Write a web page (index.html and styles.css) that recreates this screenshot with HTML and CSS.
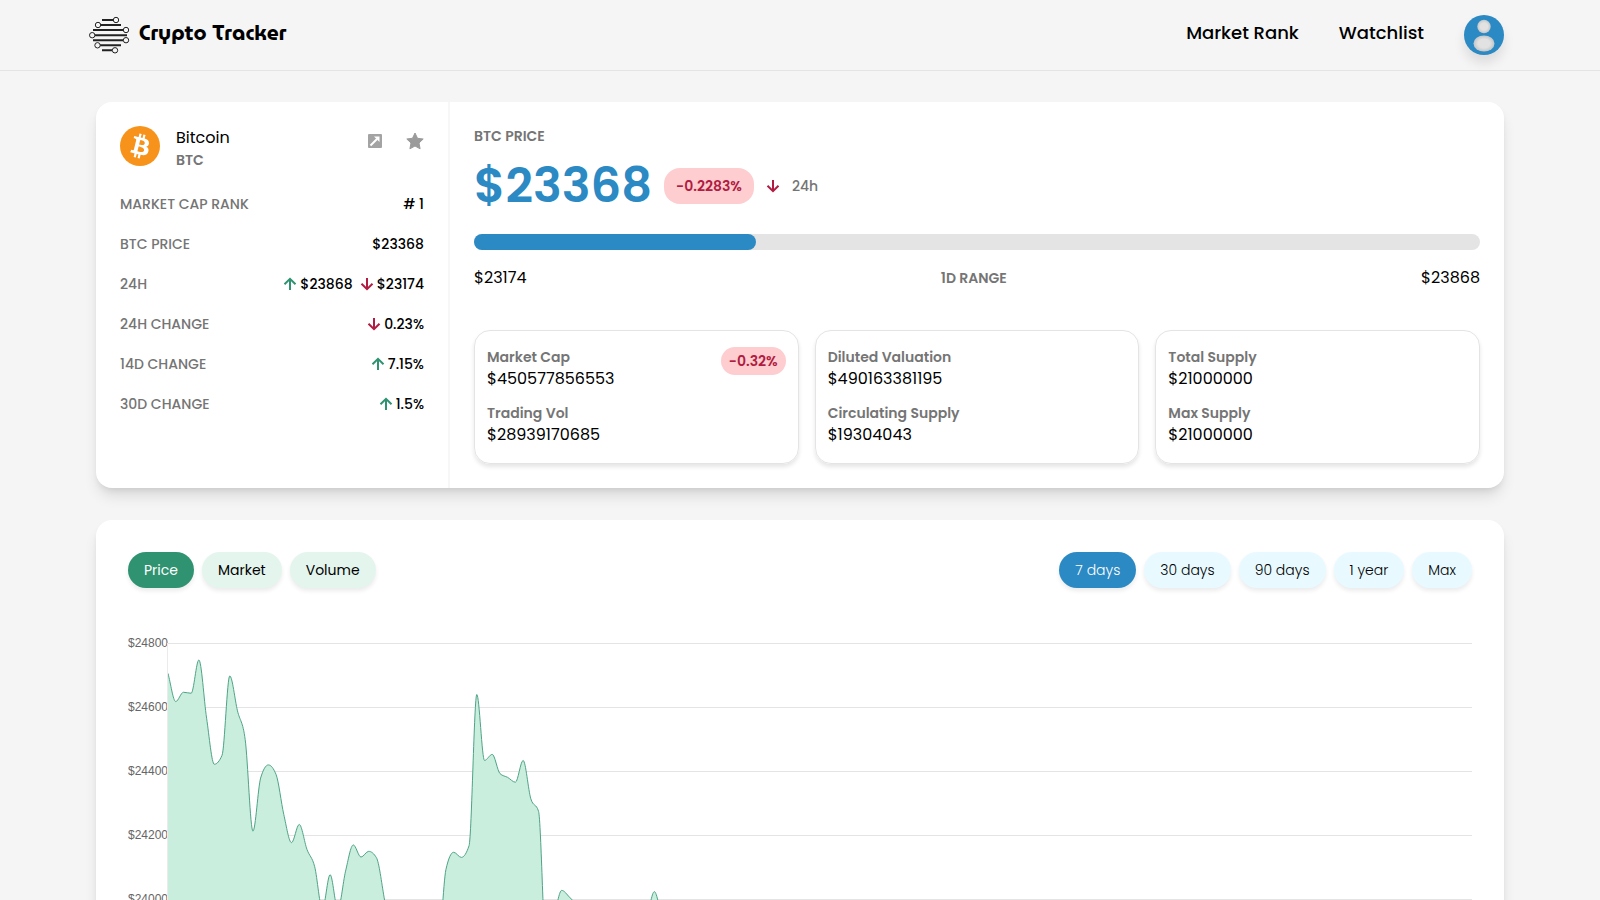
FILE: index.html
```html
<!DOCTYPE html>
<html lang="en">
<head>
  <meta charset="UTF-8" />
  <meta name="viewport" content="width=device-width, initial-scale=1.0" />
  <title>Crypto Tracker</title>
  <link rel="stylesheet" href="styles.css">
</head>
<body>
  <!-- shared icons -->
  <svg class="sprite" aria-hidden="true">
    <symbol id="arrow-up" viewBox="0 0 14 14">
      <path d="M7 13V2M1.500 7.300L7 1.800l5.500 5.500" fill="none" stroke="currentColor" stroke-width="2" />
    </symbol>
    <symbol id="arrow-down" viewBox="0 0 14 14">
      <path d="M7 1v11M1.500 6.700L7 12.200l5.500-5.500" fill="none" stroke="currentColor" stroke-width="2" />
    </symbol>
  </svg>

  <header class="header">
    <a href="#" class="brand">
      <svg class="brand-icon" viewBox="0 0 40 40" fill="none" stroke="#222">
        <path d="M13 5h11M12 10h20M4 15h30M6 20.200h32M4 25.200h30M11 30.300h21M13 35.300h10" stroke-width="2" />
        <g fill="#f5f5f5" stroke-width="1">
          <circle cx="27" cy="5" r="2.700" />
          <circle cx="9" cy="10" r="2.700" />
          <circle cx="37" cy="15" r="2.700" />
          <circle cx="3.200" cy="20.200" r="2.700" />
          <circle cx="37" cy="25.200" r="2.700" />
          <circle cx="8.500" cy="30.300" r="2.700" />
          <circle cx="26" cy="35.300" r="2.700" />
        </g>
      </svg>
      <span class="brand-name">Crypto Tracker</span>
    </a>
    <nav class="nav">
      <a href="#">Market Rank</a>
      <a href="#">Watchlist</a>
      <button class="avatar" aria-label="Account">
        <svg viewBox="0 0 40 40">
          <defs>
            <radialGradient id="shade">
              <stop offset="55%" stop-color="#e2e2e2" />
              <stop offset="100%" stop-color="#c2c6c9" />
            </radialGradient>
          </defs>
          <circle cx="20" cy="11.500" r="6.700" fill="url(#shade)" />
          <ellipse cx="20" cy="28.500" rx="10.500" ry="8" fill="url(#shade)" />
        </svg>
      </button>
    </nav>
  </header>

  <main class="container">
    <section class="card coin">
      <div class="info">
        <div class="coin-head">
          <svg class="coin-logo" viewBox="0 0 32 32">
            <circle cx="16" cy="16" r="16" fill="#f7931a" />
            <path fill="#fff" d="M23.189 14.020c.314-2.096-1.283-3.223-3.465-3.975l.708-2.840-1.728-.430-.690 2.765c-.454-.114-.920-.220-1.385-.326l.695-2.783L15.596 6l-.708 2.839c-.376-.086-.746-.170-1.104-.260l.002-.009-2.384-.595-.460 1.846s1.283.294 1.256.312c.700.175.826.638.805 1.006l-.806 3.235c.048.012.110.030.180.057l-.183-.045-1.130 4.532c-.086.212-.303.531-.793.410.018.025-1.256-.313-1.256-.313l-.858 1.978 2.250.561c.418.105.828.215 1.231.318l-.715 2.872 1.727.430.708-2.840c.472.127.930.245 1.378.357l-.706 2.828 1.728.430.715-2.866c2.948.558 5.164.333 6.097-2.333.752-2.146-.037-3.385-1.588-4.192 1.130-.260 1.980-1.003 2.207-2.538zm-3.950 5.538c-.533 2.147-4.148.986-5.320.695l.950-3.805c1.172.293 4.929.872 4.370 3.110zm.535-5.569c-.487 1.953-3.495.960-4.470.717l.860-3.450c.975.243 4.118.696 3.610 2.733z" />
          </svg>
          <div class="coin-title">
            <h1>Bitcoin</h1>
            <p>BTC</p>
          </div>
          <div class="coin-actions">
            <a href="#" aria-label="Open website">
              <svg width="18" height="18" viewBox="0 0 18 18">
                <rect x="2" y="2" width="14" height="14" rx="1" fill="#a3a3a3" />
                <path d="M4.500 13.500l6.500-6.500" stroke="#fff" stroke-width="2" />
                <path d="M8 4.500h5.500V10z" fill="#fff" />
              </svg>
            </a>
            <button aria-label="Add to watchlist">
              <svg width="18" height="18" viewBox="0 0 18 18">
                <path d="M9 1l2.500 5.300 5.700.700-4.200 4 1.100 5.800L9 14l-5.100 2.800L5 11 .800 7l5.700-.700z" fill="#9b9b9b" stroke="#9b9b9b" stroke-linejoin="round" />
              </svg>
            </button>
          </div>
        </div>
        <dl class="rows">
          <div><dt>MARKET CAP RANK</dt><dd># 1</dd></div>
          <div><dt>BTC PRICE</dt><dd>$23368</dd></div>
          <div>
            <dt>24H</dt>
            <dd>
              <svg class="arrow up"><use href="#arrow-up" /></svg><span>$23868</span>
              <svg class="arrow down next"><use href="#arrow-down" /></svg><span>$23174</span>
            </dd>
          </div>
          <div><dt>24H CHANGE</dt><dd><svg class="arrow down"><use href="#arrow-down" /></svg>0.23%</dd></div>
          <div><dt>14D CHANGE</dt><dd><svg class="arrow up"><use href="#arrow-up" /></svg>7.15%</dd></div>
          <div><dt>30D CHANGE</dt><dd><svg class="arrow up"><use href="#arrow-up" /></svg>1.5%</dd></div>
        </dl>
      </div>

      <div class="stats">
        <h2 class="label">BTC PRICE</h2>
        <div class="price-row">
          <span class="price">$23368</span>
          <span class="badge">-0.2283%</span>
          <svg class="arrow down"><use href="#arrow-down" /></svg>
          <span class="period">24h</span>
        </div>
        <div class="range-bar"><div class="range-fill" style="width: 28%"></div></div>
        <div class="range-labels">
          <span>$23174</span>
          <span class="label">1D RANGE</span>
          <span>$23868</span>
        </div>
        <div class="boxes">
          <dl class="box">
            <dt>Market Cap</dt>
            <dd>$450577856553</dd>
            <dt>Trading Vol</dt>
            <dd>$28939170685</dd>
            <dd class="badge small">-0.32%</dd>
          </dl>
          <dl class="box">
            <dt>Diluted Valuation</dt>
            <dd>$490163381195</dd>
            <dt>Circulating Supply</dt>
            <dd>$19304043</dd>
          </dl>
          <dl class="box">
            <dt>Total Supply</dt>
            <dd>$21000000</dd>
            <dt>Max Supply</dt>
            <dd>$21000000</dd>
          </dl>
        </div>
      </div>
    </section>

    <section class="card history">
      <div class="filters">
        <div class="group types">
          <button class="active">Price</button>
          <button>Market</button>
          <button>Volume</button>
        </div>
        <div class="group days">
          <button class="active">7 days</button>
          <button>30 days</button>
          <button>90 days</button>
          <button>1 year</button>
          <button>Max</button>
        </div>
      </div>
      <div class="chart">
        <div class="axis">
          <span>$24800</span>
          <span>$24600</span>
          <span>$24400</span>
          <span>$24200</span>
          <span>$24000</span>
        </div>
        <div class="plot">
          <svg id="plot" viewBox="0 0 1304 320" preserveAspectRatio="none">
            <path id="area" />
            <path id="line" />
          </svg>
        </div>
      </div>
    </section>
  </main>

  <script src="chart.js"></script>
</body>
</html>
```
FILE: styles.css
```css
* {
  box-sizing: border-box;
}

body {
  margin: 0;
  height: 100vh;
  overflow: hidden;
  background: #f5f5f5;
  color: #000;
  font-family: Poppins, Inter, sans-serif;
  font-size: 16px;
  line-height: 24px;
}

h1, h2, p, dl, dd {
  margin: 0;
}

a {
  color: inherit;
  text-decoration: none;
}

button {
  border: none;
  padding: 0;
  background: none;
  font: inherit;
  color: inherit;
  cursor: pointer;
}

svg {
  display: block;
}

.sprite {
  position: absolute;
  width: 0;
  height: 0;
}

/* header */
.header {
  display: flex;
  justify-content: space-between;
  align-items: center;
  height: 71px;
  padding: 0 6%;
  border-bottom: 1px solid #e4e4e4;
}

.brand {
  display: flex;
  align-items: center;
  gap: 10px;
  margin-left: -7px;
}

.brand-icon {
  width: 40px;
  height: 40px;
  overflow: visible;
}

.brand-name {
  font-family: MuseoModerno, Poppins, sans-serif;
  font-size: 21px;
  font-weight: 700;
  font-kerning: none;
  font-variant-ligatures: none;
  padding-bottom: 4px;
}

.nav {
  display: flex;
  align-items: center;
  gap: 40px;
  font-size: 18px;
  font-weight: 500;
}

.nav a {
  padding-bottom: 4px;
}

.avatar {
  width: 40px;
  height: 40px;
  border-radius: 50%;
  background: #2b89c3;
  box-shadow: 0 8px 12px rgba(0, 0, 0, 0.1);
}

/* cards */
.container {
  width: 88%;
  margin: 31px auto 0;
}

.card {
  background: #fff;
  border-radius: 16px;
  box-shadow: 0 10px 15px -3px rgba(0, 0, 0, 0.12), 0 4px 6px -2px rgba(0, 0, 0, 0.08);
  margin-bottom: 32px;
}

.coin {
  display: grid;
  grid-template-columns: 1fr 3fr;
}

.info {
  padding: 24px;
}

.coin-head {
  display: flex;
  gap: 16px;
}

.coin-logo {
  width: 40px;
  height: 40px;
}

.coin-title h1 {
  font-size: 16px;
  font-weight: 400;
  line-height: 24px;
}

.coin-title p {
  font-size: 14px;
  font-weight: 600;
  line-height: 20px;
  color: #757575;
}

.coin-actions {
  display: flex;
  gap: 22px;
  margin: 6px 0 0 auto;
  height: 18px;
}

.rows {
  margin-top: 14px;
  font-size: 14px;
  font-weight: 500;
}

.rows div {
  display: flex;
  justify-content: space-between;
  align-items: center;
  height: 40px;
}

.rows dt {
  color: #757575;
}

.rows dd {
  display: flex;
  align-items: center;
  gap: 3px;
}

.arrow {
  width: 14px;
  height: 14px;
}

.up {
  color: #2f9270;
}

.down {
  color: #b01c42;
}

.next {
  margin-left: 4px;
}

.stats {
  padding: 24px;
  border-left: 2px solid #f7f7f7;
}

.label {
  font-size: 14px;
  font-weight: 600;
  line-height: 20px;
  color: #757575;
}

.price-row {
  display: flex;
  align-items: center;
  height: 56px;
  margin-top: 12px;
}

.price {
  font-size: 48px;
  font-weight: 600;
  line-height: 56px;
  color: #2b89c3;
}

.badge {
  padding: 6px 12px;
  border-radius: 16px;
  background: #fecdcf;
  color: #b01c42;
  font-size: 14px;
  font-weight: 600;
  line-height: 24px;
}

.price-row .badge {
  margin: 0 12px;
}

.period {
  margin-left: 12px;
  font-size: 14px;
  font-weight: 500;
  color: #757575;
}

.range-bar {
  height: 16px;
  margin-top: 20px;
  border-radius: 8px;
  background: #e4e4e4;
}

.range-fill {
  height: 16px;
  border-radius: 8px;
  background: #2b89c3;
}

.range-labels {
  display: flex;
  justify-content: space-between;
  align-items: center;
  margin-top: 16px;
}

.boxes {
  display: grid;
  grid-template-columns: repeat(3, 1fr);
  gap: 16px;
  margin-top: 40px;
}

.box {
  position: relative;
  padding: 16px 12px;
  border: 1px solid #e4e4e4;
  border-radius: 16px;
  box-shadow: 0 3px 4px rgba(0, 0, 0, 0.1);
}

.box dt {
  font-size: 14px;
  font-weight: 600;
  line-height: 20px;
  color: #757575;
}

.box dd {
  line-height: 24px;
}

.box dd + dt {
  margin-top: 12px;
}

.box .small {
  position: absolute;
  top: 16px;
  right: 12px;
  padding: 2px 8px;
}

/* price history */
.history {
  padding: 32px;
}

.filters {
  display: flex;
  justify-content: space-between;
}

.group {
  display: flex;
  gap: 8px;
  font-size: 14px;
}

.group button {
  height: 36px;
  padding: 0 16px;
  border-radius: 18px;
  box-shadow: 0 3px 4px rgba(0, 0, 0, 0.08);
}

.types button {
  background: #e4f5ee;
}

.types .active {
  background: #2f9270;
  color: #fff;
}

.days button {
  background: #e8faff;
  font-weight: 300;
}

.days .active {
  background: #2b89c3;
  color: #fff;
}

.chart {
  display: grid;
  grid-template-columns: 40px 1fr;
  margin-top: 47px;
}

.axis {
  display: flex;
  flex-direction: column;
  font-family: "Liberation Sans", Arial, sans-serif;
  font-size: 12px;
  color: #666;
}

.axis span {
  height: 64px;
  line-height: 16px;
}

.plot {
  height: 320px;
  margin-top: 8px;
  box-shadow: -1px 0 #ebebeb;
  background: repeating-linear-gradient(#e4e4e4 0 1px, transparent 1px 64px);
}

#plot {
  width: 100%;
  height: 100%;
}

#area {
  fill: #c9eedd;
}

#line {
  fill: none;
  stroke: #4fa387;
  stroke-width: 1;
  vector-effect: non-scaling-stroke;
}
```
FILE: chart.js
```js
// hourly prices
const prices = [
  24705, 24617, 24646, 24643, 24747, 24565, 24421, 24449, 24697, 24588,
  24498, 24212, 24378, 24419, 24389, 24264, 24176, 24233, 24155, 24101,
  23968, 24076, 23968, 24087, 24169, 24131, 24149, 24129, 24004, 23850,
  23800, 23820, 23805, 23815, 23825, 23843, 24092, 24146, 24130, 24167,
  24639, 24433, 24452, 24392, 24380, 24365, 24433, 24313, 24274, 23830,
  23940, 24027, 24006, 23980, 23950, 23930, 23920, 23900, 23890, 23880,
  23880, 23900, 23940, 24023, 23940, 23880, 23850, 23840
];

const step = 7.72;
const pts = prices.map((p, i) => [i * step, (24800 - p) * 64 / 200]);

// monotone tangents, so the curve never overshoots a point
const slopes = pts.slice(1).map((p, i) => (p[1] - pts[i][1]) / step);
const tangents = pts.map((p, i) => {
  const a = slopes[i - 1];
  const b = slopes[i];
  if (a === undefined) return b;
  if (b === undefined) return a;
  if (a * b <= 0) return 0;
  return Math.sign(a) * Math.min(2 * Math.abs(a), 2 * Math.abs(b), Math.abs(a + b) / 2);
});

let d = `M${pts[0][0]} ${pts[0][1]}`;
for (let i = 1; i < pts.length; i++) {
  const [x0, y0] = pts[i - 1];
  const [x1, y1] = pts[i];
  const h = step / 3;
  d += `C${x0 + h} ${y0 + tangents[i - 1] * h} ${x1 - h} ${y1 - tangents[i] * h} ${x1} ${y1}`;
}

const lastX = pts[pts.length - 1][0];
document.getElementById("line").setAttribute("d", d);
document.getElementById("area").setAttribute("d", `${d}L${lastX} 320L0 320Z`);
```
